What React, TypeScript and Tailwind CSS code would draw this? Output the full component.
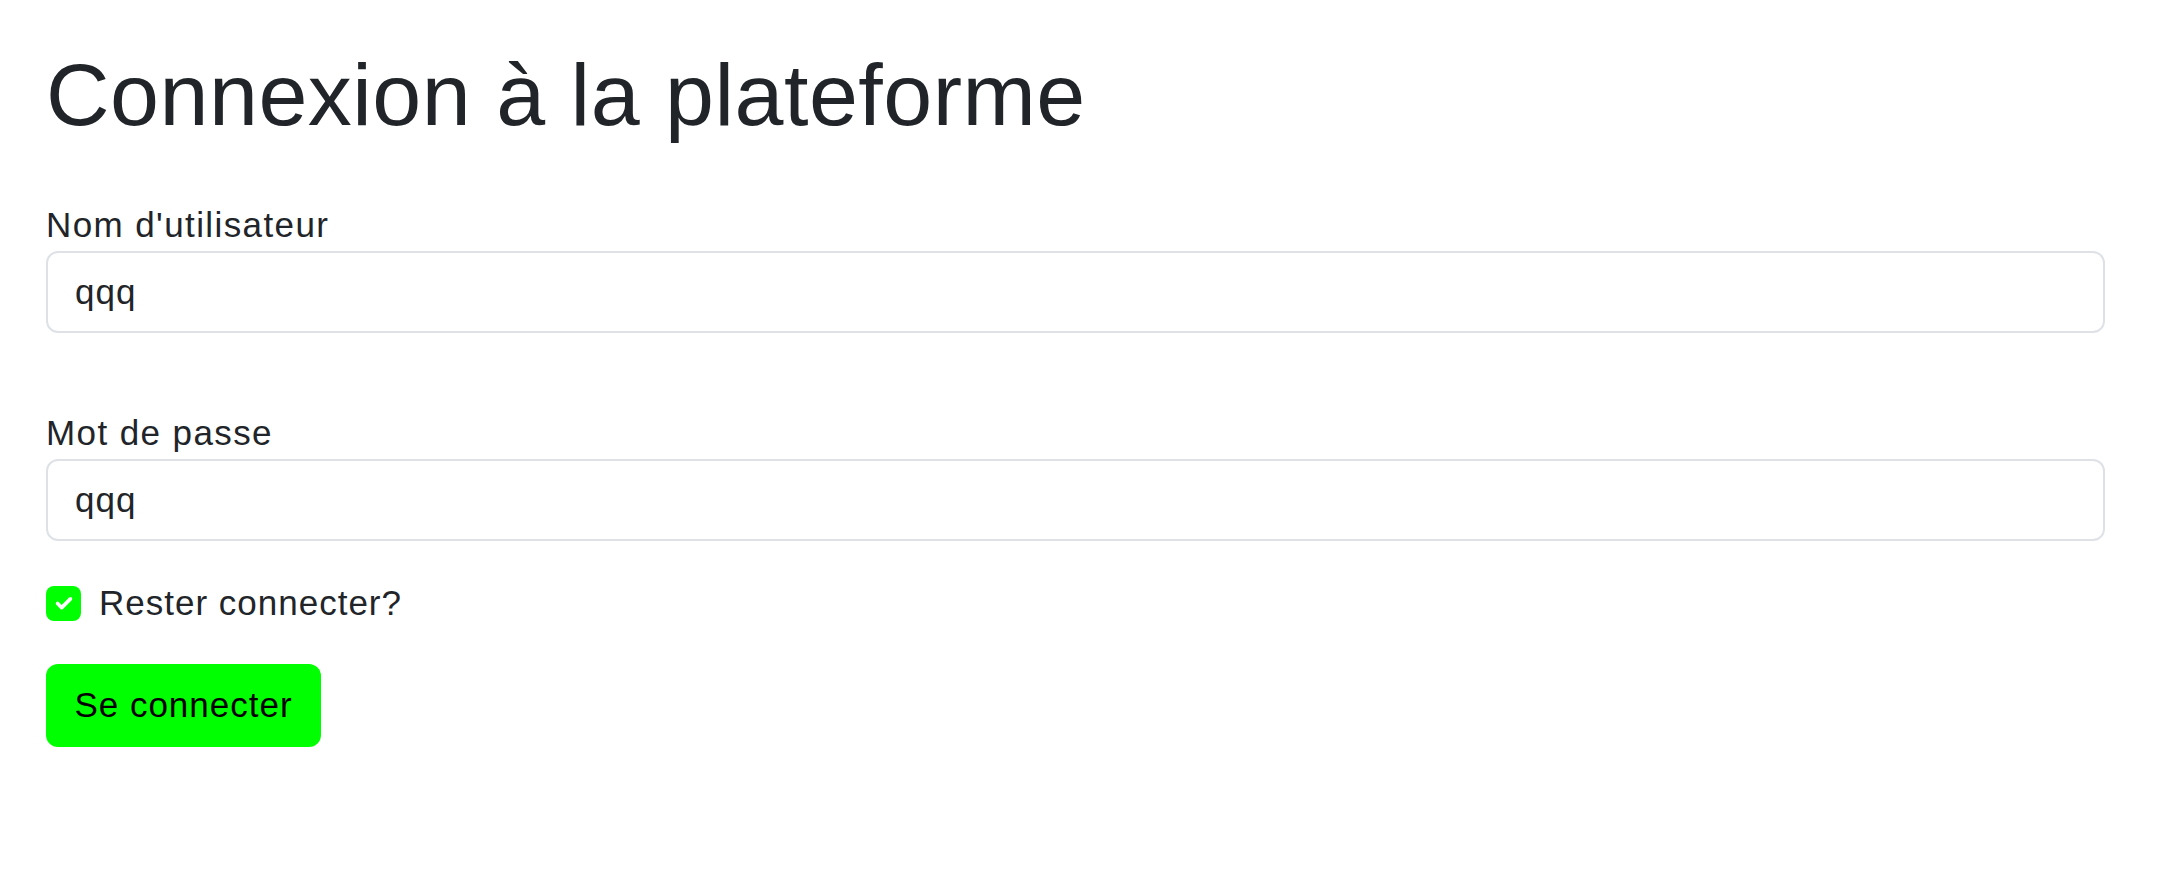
import { useState } from "react";

const font = "font-['Comic_Sans_MS','Liberation_Sans',sans-serif]";

function Field({ label, type, value, onChange }: { label: string; type: string; value: string; onChange: (v: string) => void }) {
  return (
    <div className="flex flex-col">
      <label className="text-[35px] leading-[52px] tracking-[1.4px] text-[#212529]">{label}</label>
      <input
        type={type === "password" ? "text" : type}
        value={value}
        onChange={(e) => onChange(e.target.value)}
        className={`${font} h-[82px] w-full rounded-[12px] border-2 border-[#dee2e6] bg-white px-[27px] text-[35px] tracking-[1px] text-[#212529] outline-none`}
      />
    </div>
  );
}

export default function App() {
  const [user, setUser] = useState("qqq");
  const [pass, setPass] = useState("qqq");
  const [remember, setRemember] = useState(true);

  return (
    <div className={`${font} min-h-[870px] bg-white pl-[46px] pr-[69px] pt-[42px] text-[#212529]`}>
      <h1 className="text-[88px] leading-[106px] tracking-[0.5px]">Connexion à la plateforme</h1>

      <form className="mt-[51px] flex flex-col" onSubmit={(e) => e.preventDefault()}>
        <Field label="Nom d'utilisateur" type="text" value={user} onChange={setUser} />
        <div className="mt-[74px]">
          <Field label="Mot de passe" type="password" value={pass} onChange={setPass} />
        </div>

        <label className="mt-[36px] flex h-[52px] cursor-pointer items-center gap-[18px]">
          <span
            onClick={() => setRemember(!remember)}
            className={`flex h-[35px] w-[35px] items-center justify-center rounded-[8px] ${remember ? "bg-[#0f0]" : "border-2 border-[#dee2e6] bg-white"}`}
          >
            {remember && (
              <svg width="22" height="22" viewBox="0 0 24 24" fill="none" stroke="white" strokeWidth="4" strokeLinecap="round" strokeLinejoin="round">
                <path d="M5 12.5l4.5 4.5L19 7.5" />
              </svg>
            )}
          </span>
          <span className="text-[35px] tracking-[1px]">Rester connecter?</span>
        </label>

        <div className="mt-[35px]">
          <button type="submit" className="h-[83px] w-[275px] rounded-[12px] bg-[#0f0] text-[35px] tracking-[1px] text-black">
            Se connecter
          </button>
        </div>
      </form>
    </div>
  );
}
